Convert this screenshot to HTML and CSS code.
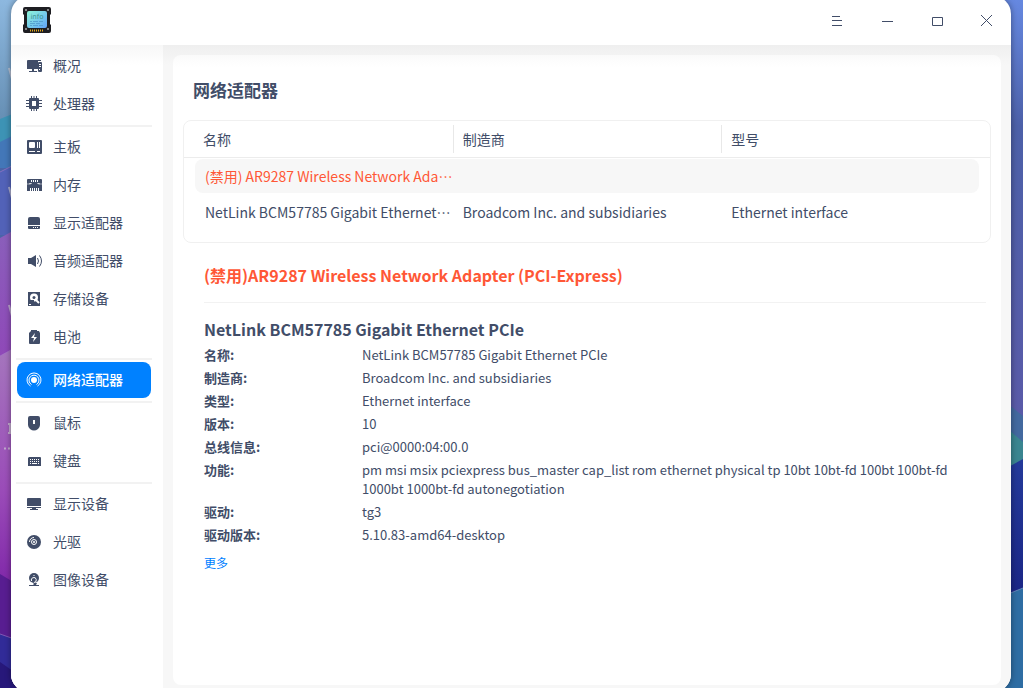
FILE: index.html
```
<!DOCTYPE html>
<html lang="zh-CN">
<head>
    <meta charset="UTF-8">
    <meta name="viewport" content="width=device-width, initial-scale=1.0">
    <title>设备管理器</title>
    <link rel="stylesheet" href="styles.css">
</head>
<body>
    <svg class="wallpaper wallpaper-left" viewBox="0 0 20 688" preserveAspectRatio="none" aria-hidden="true">
        <defs>
            <linearGradient id="skyLeft" x1="0" y1="0" x2="0" y2="1">
                <stop offset="0" stop-color="#8db8df"/>
                <stop offset="1" stop-color="#668fb4"/>
            </linearGradient>
            <linearGradient id="violet" x1="0" y1="0" x2="0" y2="1">
                <stop offset="0" stop-color="#8a60bb"/>
                <stop offset="1" stop-color="#8f48b8"/>
            </linearGradient>
            <linearGradient id="purple" x1="0" y1="0" x2="0" y2="1">
                <stop offset="0" stop-color="#a577bd"/>
                <stop offset="0.6" stop-color="#9a4bb8"/>
                <stop offset="1" stop-color="#7f26a8"/>
            </linearGradient>
        </defs>
        <rect width="20" height="120" fill="url(#skyLeft)"/>
        <path d="M0 119 20 111V168H0Z" fill="#3d93b5"/>
        <path d="M0 142 20 132V168H0Z" fill="#4377b8"/>
        <path d="M0 172 20 162V235H0Z" fill="#5262b8"/>
        <path d="M0 238 20 227V360H0Z" fill="url(#violet)"/>
        <path d="M0 356 20 345V590H0Z" fill="url(#purple)"/>
        <path d="M0 574 20 586V650H0Z" fill="#581d91"/>
        <path d="M0 634 20 641V688H0Z" fill="#312b98"/>
        <path d="M0 662 20 676V688H0Z" fill="#27187a"/>
        <path d="M0 172 20 162M0 356 20 345M0 634 20 641" stroke="#a77cc8" stroke-opacity="0.6"/>
        <!-- edges of the desktop icon labels -->
        <path d="m9 68 3 11M9 187l3 11M9 305l3 11M8 424h3M10 424v9M8 433h4M4 448.500h2M8 448.500h2" fill="none" stroke="#d0ccd6" stroke-opacity="0.7" stroke-width="2"/>
    </svg>
    <svg class="wallpaper wallpaper-right" viewBox="0 0 20 688" preserveAspectRatio="none" aria-hidden="true">
        <defs>
            <linearGradient id="skyRight" x1="0" y1="0" x2="0" y2="1">
                <stop offset="0" stop-color="#6688e0"/>
                <stop offset="0.3" stop-color="#4c60a8"/>
                <stop offset="1" stop-color="#5a5aa8"/>
            </linearGradient>
            <linearGradient id="navy" x1="0" y1="0" x2="0" y2="1">
                <stop offset="0" stop-color="#243a9a"/>
                <stop offset="1" stop-color="#1a2585"/>
            </linearGradient>
        </defs>
        <rect width="20" height="420" fill="url(#skyRight)"/>
        <path d="M0 400 20 416V460H0Z" fill="#43699f"/>
        <path d="M0 425 20 442V480H0Z" fill="#3a8590"/>
        <path d="M0 470 20 459V600H0Z" fill="url(#navy)"/>
        <path d="M0 596 20 588V688H0Z" fill="#2e6da3"/>
        <path d="M0 596 20 588" stroke="#7f9cc8" stroke-opacity="0.7"/>
    </svg>

    <div class="window">
        <header class="titlebar">
            <svg class="logo" viewBox="0 0 28 28" aria-hidden="true">
                <defs>
                    <linearGradient id="screen" x1="0" y1="0" x2="1" y2="1">
                        <stop offset="0" stop-color="#8df5d8"/>
                        <stop offset="1" stop-color="#62a4fb"/>
                    </linearGradient>
                </defs>
                <path d="M2 1h24q2 0 2 2v5l-1 1v9l1 1v6q0 2-2 2H2q-2 0-2-2v-6l1-1V9L0 8V3q0-2 2-2Z" fill="#1e1e22"/>
                <g fill="#aaa"><circle cx="3" cy="4" r="1"/><circle cx="25" cy="4" r="1"/><circle cx="3" cy="23" r="1"/><circle cx="25" cy="23" r="1"/></g>
                <rect x="4" y="5" width="20" height="17" rx="2" fill="url(#screen)"/>
                <text x="14" y="13" class="logo-text">info</text>
                <path d="M7 15.500h2m1 0h5m1 0h4M7 17.500h5m1 0h4M7 19.500h2m1 0h5m1 0h4" stroke="#4f98cc" stroke-width="0.800"/>
                <path d="M7 24.500h14" stroke="#e5a91c" stroke-width="2" stroke-dasharray="1 1"/>
            </svg>
            <div class="window-buttons">
                <button type="button" aria-label="菜单"><svg viewBox="0 0 12 12"><path d="M1 1.500h8M1 5.500h10M1 10.500h10"/></svg></button>
                <button type="button" aria-label="最小化"><svg viewBox="0 0 12 12"><path d="M1 6.500h11"/></svg></button>
                <button type="button" aria-label="最大化"><svg viewBox="0 0 12 12"><path d="M1.500 2.500h10v8h-10Z"/></svg></button>
                <button type="button" aria-label="关闭"><svg viewBox="0 0 12 12"><path d="m0 0 11 11M11 0 0 11"/></svg></button>
            </div>
        </header>

        <div class="main">
            <nav class="sidebar">
                <a href="#"><svg viewBox="0 0 16 16"><path d="M1 2h13v1h-3v8H0V3q0-1 1-1Z"/><path d="M2 13h8v1H2ZM5 11h2v2H5Z"/><path fill-rule="evenodd" d="M12 4h2q1 0 1 1v8q0 1-1 1h-2q-1 0-1-1V5q0-1 1-1Zm0 2v1h2V6Zm0 2v1h2V8Zm0 3v1h1v-1Z"/></svg>概况</a>
                <a href="#"><svg viewBox="0 0 16 16"><path fill-rule="evenodd" d="M3 2h8q1 0 1 1v9q0 1-1 1H3q-1 0-1-1V3q0-1 1-1Zm2 3v5h4V5Z"/><path class="line" d="M4.500 0v2M7 0v2M9.500 0v2M4.500 13v2M7 13v2M9.500 13v2M-1 4.500h3M-1 7.500h3M-1 10.500h3M12 4.500h3M12 7.500h3M12 10.500h3"/></svg>处理器</a>
                <hr>
                <a href="#"><svg viewBox="0 0 16 16"><path fill-rule="evenodd" d="M1 1h13q1 0 1 1v12q0 1-1 1H1q-1 0-1-1V2q0-1 1-1Zm2 2q-1 0-1 1v4q0 1 1 1h4q1 0 1-1V4q0-1-1-1Zm7 0v6h1V3Zm2 0v6h1V3ZM2 12v1h6v-1Zm8 0v1h3v-1Z"/></svg>主板</a>
                <a href="#"><svg viewBox="0 0 16 16"><path d="M1 2h13q1 0 1 1v3q-1 1 0 2v6H0V8q1-1 0-2V3q0-1 1-1Z"/><path class="cut" d="M4.500 3v2M6.500 3v2M8.500 3v2M10.500 3v2M3.500 11v3M5.500 11v3M7.500 11v3M9.500 11v3M11.500 11v3M1.500 7l3-.5M10.500 6.500l3 .5"/></svg>内存</a>
                <a href="#"><svg viewBox="0 0 16 16"><path d="M3 2h8q2 0 2 2v6H1V4q0-2 2-2Z"/><path fill-rule="evenodd" d="M1 11h12v2q0 1-1 1H2q-1 0-1-1Zm5 1v1h1v-1Zm2 0v1h1v-1Zm2 0v1h1v-1Z"/></svg>显示适配器</a>
                <a href="#"><svg viewBox="0 0 16 16"><path d="M1 5h3l5-3v12l-5-3H1Z"/><path class="line" d="M10.500 5q2 3 0 6M12.500 2.500q4 5.500 0 11"/></svg>音频适配器</a>
                <a href="#"><svg viewBox="0 0 16 16"><path d="M1 1h12v14H1Z"/><circle cx="7" cy="6.500" r="4" fill="#fff"/><circle cx="7" cy="6.500" r="1.500"/><path d="M3 9h4v4H3Z"/><path d="m8 8 4 4" stroke="#fff" stroke-width="2"/><path class="cut" d="M2 13.500h2"/></svg>存储设备</a>
                <a href="#"><svg viewBox="0 0 16 16"><path fill-rule="evenodd" d="M4 1h6v1h2l1 2v10q0 1-1 1H3q-1 0-1-1V4l2-2Zm4 3L4 9h3l-1 4 4-5H7Z"/></svg>电池</a>
                <hr>
                <a href="#" class="active" aria-current="page"><svg viewBox="0 0 16 16"><circle cx="7" cy="8" r="3"/><path class="line" d="M4.500 12.500a5 5 0 1 1 5 0M3.500 14a7 7 0 1 1 7 0"/></svg>网络适配器</a>
                <hr>
                <a href="#"><svg viewBox="0 0 16 16"><path fill-rule="evenodd" d="M3 1h8q2 0 2 2v7q0 2-2 4-4 3-8 0-2-2-2-4V3q0-2 2-2Zm3 4v4h2V5Z"/></svg>鼠标</a>
                <a href="#"><svg viewBox="0 0 16 16"><path d="M2 4h11q1 0 1 1v8H1V5Z"/><path d="M3 6.500h10M3 8.500h10" stroke="#fff" stroke-dasharray="1 1"/><path class="cut" d="M3 10.500h1M5 10.500h5M11 10.500h1"/></svg>键盘</a>
                <hr>
                <a href="#"><svg viewBox="0 0 16 16"><path d="M1 2h12q1 0 1 1v7H0V3q0-1 1-1ZM0 11h14v1H9v1h2v1H3v-1h2v-1H0Z"/></svg>显示设备</a>
                <a href="#"><svg viewBox="0 0 16 16"><circle cx="7" cy="8" r="7"/><circle cx="7" cy="8" r="2.500" fill="none" stroke="#fff"/><circle cx="7" cy="8" r="1" fill="#fff"/><path class="cut" d="M2.500 8A4.500 4.500 0 0 1 7 3.500"/></svg>光驱</a>
                <a href="#"><svg viewBox="0 0 16 16"><circle cx="7" cy="6" r="5"/><path class="cut" d="M4.500 9A2.500 2.500 0 1 1 7 10.500M6.500 3.500h1"/><circle cx="7" cy="8" r="1"/><path d="M6 11h4l-1 2h3v1H2v-1h4l1-1Z"/></svg>图像设备</a>
            </nav>

            <main class="content">
                <h1>网络适配器</h1>

                <div class="device-list">
                    <table>
                        <thead>
                            <tr><th>名称</th><th>制造商</th><th>型号</th></tr>
                        </thead>
                        <tbody>
                            <tr class="selected"><td class="disabled">(禁用) AR9287 Wireless Network Ada…</td><td></td><td></td></tr>
                            <tr><td>NetLink BCM57785 Gigabit Ethernet…</td><td>Broadcom Inc. and subsidiaries</td><td>Ethernet interface</td></tr>
                        </tbody>
                    </table>
                </div>

                <section class="details">
                    <h2 class="disabled">(禁用)AR9287 Wireless Network Adapter (PCI-Express)</h2>
                    <h2>NetLink BCM57785 Gigabit Ethernet PCIe</h2>
                    <dl>
                        <dt>名称:</dt><dd>NetLink BCM57785 Gigabit Ethernet PCIe</dd>
                        <dt>制造商:</dt><dd>Broadcom Inc. and subsidiaries</dd>
                        <dt>类型:</dt><dd>Ethernet interface</dd>
                        <dt>版本:</dt><dd>10</dd>
                        <dt>总线信息:</dt><dd>pci@0000:04:00.0</dd>
                        <dt>功能:</dt><dd>pm msi msix pciexpress bus_master cap_list rom ethernet physical tp 10bt 10bt-fd 100bt 100bt-fd 1000bt 1000bt-fd autonegotiation</dd>
                        <dt>驱动:</dt><dd>tg3</dd>
                        <dt>驱动版本:</dt><dd>5.10.83-amd64-desktop</dd>
                    </dl>
                    <a href="#" class="more">更多</a>
                </section>
            </main>
        </div>
    </div>
</body>
</html>
```
FILE: styles.css
```
* {
    box-sizing: border-box;
}
body {
    margin: 0;
    height: 100vh;
    overflow: hidden;
    background: #4a64a8;
    color: #414d68;
    font-family: "Noto Sans CJK SC", sans-serif;
    font-size: 14px;
}
a {
    color: #0081ff;
    text-decoration: none;
}

/* wallpaper behind the window */
.wallpaper {
    position: absolute;
    top: 0;
    width: 20px;
    height: 100%;
}
.wallpaper-left {
    left: 0;
}
.wallpaper-right {
    right: 0;
}

/* the window is a little taller than the screen */
.window {
    position: relative;
    display: flex;
    flex-direction: column;
    height: calc(100vh + 8px);
    margin: -4px 12px 0 11px;
    border-radius: 18px;
    overflow: hidden;
    background: #fff;
    box-shadow: 0 0 6px rgba(0, 0, 0, 0.4);
}
.titlebar {
    display: flex;
    align-items: center;
    justify-content: space-between;
    height: 49px;
    padding: 0 0 2px 12px;
}
.logo {
    width: 28px;
    height: 28px;
}
.logo-text {
    font-family: "DejaVu Sans", sans-serif;
    font-size: 7px;
    text-anchor: middle;
    fill: #3c948f;
}
.window-buttons {
    display: flex;
}
.window-buttons button {
    width: 50px;
    height: 46px;
    padding: 2px 0 0 20px;
    border: 0;
    background: none;
}
.window-buttons svg {
    display: block;
    width: 12px;
    height: 12px;
    fill: none;
    stroke: #414d68;
}

.main {
    flex: 1;
    display: flex;
    min-height: 0;
    padding-bottom: 7px;
    background: linear-gradient(#efefef, #f7f7f7 20px);
}
.sidebar {
    width: 152px;
    margin-bottom: -7px;
    padding: 3px 12px 0 6px;
    background: linear-gradient(#f7f7f7, #fff 20px);
}
.sidebar a {
    display: flex;
    align-items: center;
    gap: 10px;
    height: 36px;
    margin-bottom: 2px;
    padding: 0 0 2px 10px;
    border-radius: 8px;
    color: #414d68;
}
.sidebar svg {
    width: 16px;
    height: 16px;
    margin-top: 2px;
    fill: #414d68;
    overflow: visible;
}
.sidebar .line {
    fill: none;
    stroke: #414d68;
}
.sidebar .cut {
    fill: none;
    stroke: #fff;
}
.sidebar hr {
    height: 2px;
    margin: 3px -1px 2px;
    border: 0;
    background: #f2f2f2;
}
.sidebar .active {
    background: #0081ff;
    color: #fff;
    font-weight: 500;
}
.sidebar .active svg {
    fill: #fff;
}
.sidebar .active .line {
    stroke: #fff;
}

.content {
    flex: 1;
    min-width: 0;
    margin: 10px;
    margin-bottom: 0;
    padding: 23px 10px 0;
    border-radius: 8px;
    background: linear-gradient(#fafafa, #fff 12px);
}
h1 {
    margin: 0 10px 18px;
    font-size: 17px;
    line-height: 24px;
}
.device-list {
    height: 123px;
    border: 1px solid #f0f0f0;
    border-radius: 8px;
    background: #fff;
}
table {
    width: 100%;
    table-layout: fixed;
    border-collapse: separate;
    border-spacing: 0;
}
th, td {
    padding: 0 0 0 10px;
    text-align: left;
    font-weight: 400;
    white-space: nowrap;
}
th {
    height: 37px;
    border-bottom: 1px solid #ececec;
}
th:first-child {
    padding-left: 19px;
}
/* short divider between the column heads */
th + th {
    background: linear-gradient(#e8e8e8, #e8e8e8) left center / 1px 28px no-repeat;
}
td {
    height: 36px;
    border: 1px solid transparent;
    border-width: 1px 0;
    background-clip: padding-box;
}
td:first-child {
    border-left-width: 11px;
}
td:last-child {
    border-right-width: 11px;
}
.selected td {
    background-color: #f7f7f7;
}
.selected td:first-child {
    border-radius: 19px 0 0 19px / 9px 0 0 9px;
}
.selected td:last-child {
    border-radius: 0 19px 19px 0 / 0 9px 9px 0;
}
.disabled {
    color: #ff5736;
}

.details {
    padding: 19px 5px 0 21px;
}
h2 {
    margin: 0;
    font-size: 16px;
    line-height: 26px;
}
h2.disabled {
    padding-bottom: 14px;
    margin-bottom: 13px;
    border-bottom: 1px solid #f2f2f2;
}
dl {
    display: grid;
    grid-template-columns: 158px 1fr;
    row-gap: 4px;
    margin: 3px 0 8px;
    font-size: 13px;
    line-height: 19px;
}
dt {
    font-weight: 700;
}
dd {
    margin: 0;
}
.more {
    font-size: 12px;
}
```
